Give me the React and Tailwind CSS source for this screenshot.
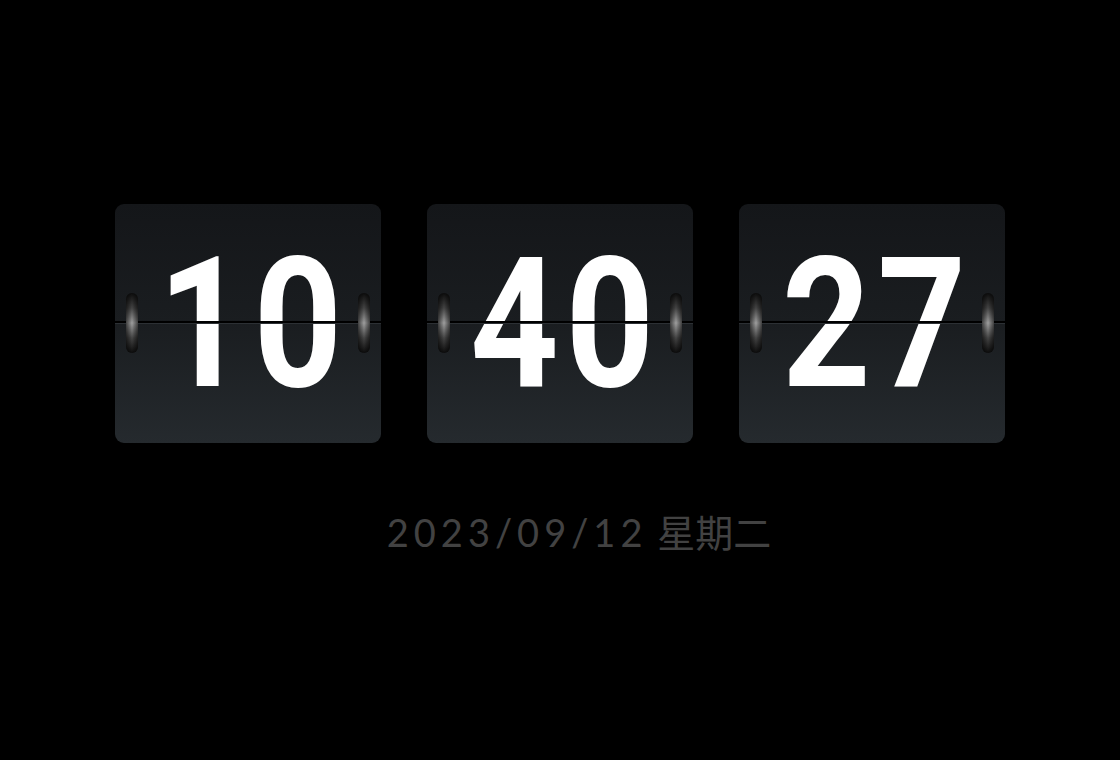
import React from 'react';

const FlipCard = ({ value }) => {
  return (
    <div className="relative w-[266px] h-[239px] rounded-[9px] bg-[linear-gradient(180deg,#141619_0%,#1a1d20_50%,#252a2e_100%)] overflow-hidden flex items-center justify-center">
      <span
        className="text-white font-bold text-[182px] leading-none tracking-[8px] pl-[12px] scale-x-[0.85]"
        style={{ fontFamily: 'Roboto, "Liberation Sans", sans-serif' }}
      >
        {value}
      </span>
      {/* split line */}
      <div className="absolute left-0 right-0 top-[117px] h-[2px] bg-black" />
      <div className="absolute left-0 right-0 top-[119px] h-px bg-[#2c3034]" />
      {/* hinge pins */}
      <div className="absolute left-[11px] top-[89px] w-[12px] h-[60px] rounded-[6px] bg-[linear-gradient(180deg,#0c0c0c_0%,#444444_25%,#a0a0a0_50%,#444444_75%,#0c0c0c_100%)]">
        <div className="w-full h-full rounded-[6px] bg-[linear-gradient(90deg,rgba(0,0,0,0.6)_0%,rgba(0,0,0,0)_50%,rgba(0,0,0,0.6)_100%)]" />
      </div>
      <div className="absolute right-[11px] top-[89px] w-[12px] h-[60px] rounded-[6px] bg-[linear-gradient(180deg,#0c0c0c_0%,#444444_25%,#a0a0a0_50%,#444444_75%,#0c0c0c_100%)]">
        <div className="w-full h-full rounded-[6px] bg-[linear-gradient(90deg,rgba(0,0,0,0.6)_0%,rgba(0,0,0,0)_50%,rgba(0,0,0,0.6)_100%)]" />
      </div>
    </div>
  );
};

const App = () => {
  return (
    <div className="w-[1120px] h-[760px] bg-black flex flex-col items-center">
      <div className="mt-[204px] flex gap-[46px]">
        <FlipCard value="10" />
        <FlipCard value="40" />
        <FlipCard value="27" />
      </div>
      <div
        className="mt-[70px] text-[#424242] text-[38px] leading-none pl-[38px]"
        style={{ fontFamily: 'Lato, "Noto Sans CJK SC", sans-serif' }}
      >
        <span className="tracking-[5px]">2023/09/12</span> 星期二
      </div>
    </div>
  );
};

export default App;
